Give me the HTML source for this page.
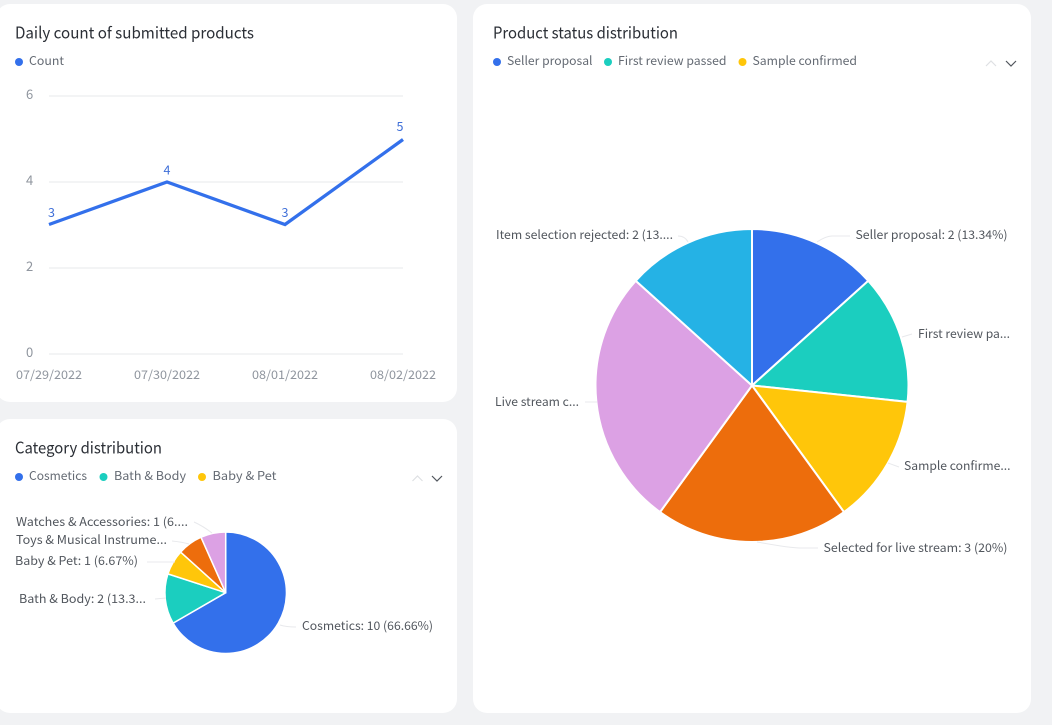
<!DOCTYPE html>
<html lang="en">
<head>
<meta charset="utf-8">
<title>Dashboard</title>
<style>
html,body{margin:0;padding:0;width:1052px;height:725px;overflow:hidden;background:#f1f2f4}
svg{display:block}
text{font-family:"Noto Sans CJK SC","Liberation Sans",sans-serif}
.t{font-size:16px;fill:#2b2f36}
.l{font-size:12px;fill:#646a73}
.a{font-size:12px;fill:#8f959e}
.n{font-size:13px;fill:#8f959e}
.d{font-size:12.5px;fill:#3f6fd8}
.p{font-size:12px;fill:#51565d}
.g{stroke:#eff0f2;stroke-width:1.5;fill:none}
.ln{stroke:#e8e9ec;stroke-width:1;fill:none}
.s{stroke:#fff;stroke-width:2;stroke-linejoin:round}
.s2{stroke:#fff;stroke-width:1.5;stroke-linejoin:round}
</style>
</head>
<body>
<svg width="1052" height="725" viewBox="0 0 1052 725" xmlns="http://www.w3.org/2000/svg">
<rect width="1052" height="725" fill="#f1f2f4"/>
<rect x="-4" y="4" width="461" height="398" rx="14" fill="#fff"/>
<rect x="-4" y="419" width="461" height="294" rx="14" fill="#fff"/>
<rect x="473" y="4" width="558" height="709" rx="14" fill="#fff"/>

<!-- Card 1 -->
<text class="t" x="15" y="38.500" textLength="239" lengthAdjust="spacingAndGlyphs">Daily count of submitted products</text>
<circle cx="19" cy="62" r="4" fill="#3370eb"/>
<text class="l" x="29" y="65" textLength="35" lengthAdjust="spacingAndGlyphs">Count</text>
<path class="g" d="M49 96H403M49 182H403M49 268H403M49 354H403"/>
<text class="n" x="26" y="99">6</text>
<text class="n" x="26" y="185">4</text>
<text class="n" x="26" y="271">2</text>
<text class="n" x="26" y="357">0</text>
<path d="M49 224.500L167 182L285 224.500L403 139.500" fill="none" stroke="#3370eb" stroke-width="3.300"/>
<text class="d" x="48" y="217">3</text>
<text class="d" x="163.500" y="174.500">4</text>
<text class="d" x="281.500" y="217">3</text>
<text class="d" x="396.500" y="131">5</text>
<text class="a" x="16" y="379" textLength="66" lengthAdjust="spacingAndGlyphs">07/29/2022</text>
<text class="a" x="134" y="379" textLength="66" lengthAdjust="spacingAndGlyphs">07/30/2022</text>
<text class="a" x="252" y="379" textLength="66" lengthAdjust="spacingAndGlyphs">08/01/2022</text>
<text class="a" x="370" y="379" textLength="66" lengthAdjust="spacingAndGlyphs">08/02/2022</text>

<!-- Card 2 -->
<text class="t" x="15" y="453.500" textLength="147" lengthAdjust="spacingAndGlyphs">Category distribution</text>
<circle cx="19" cy="477" r="4" fill="#3370eb"/>
<text class="l" x="29" y="480" textLength="58" lengthAdjust="spacingAndGlyphs">Cosmetics</text>
<circle cx="103.500" cy="477" r="4" fill="#1bcebf"/>
<text class="l" x="114" y="480" textLength="72" lengthAdjust="spacingAndGlyphs">Bath &amp; Body</text>
<circle cx="202" cy="477" r="4" fill="#ffc60a"/>
<text class="l" x="212.500" y="480" textLength="64" lengthAdjust="spacingAndGlyphs">Baby &amp; Pet</text>
<path d="M412.500 481L417.500 476L422.500 481" fill="none" stroke="#dee0e3" stroke-width="1.200"/>
<path d="M432 476L437 481L442 476" fill="none" stroke="#51565d" stroke-width="1.200"/>

<path class="s2" fill="#3370eb" d="M225.700 592.700L225.700 531.950A60.750 60.750 0 1 1 173.100 623.100Z"/>
<path class="s2" fill="#1bcebf" d="M225.700 592.700L173.100 623.100A60.750 60.750 0 0 1 167.900 573.900Z"/>
<path class="s2" fill="#ffc60a" d="M225.700 592.700L167.900 573.900A60.750 60.750 0 0 1 180.600 552.100Z"/>
<path class="s2" fill="#ed6d0c" d="M225.700 592.700L180.600 552.100A60.750 60.750 0 0 1 201 537.200Z"/>
<path class="s2" fill="#dca1e4" d="M225.700 592.700L201 537.200A60.750 60.750 0 0 1 225.700 531.950Z"/>
<path class="ln" d="M280 625Q286 627 296 627M166 598L155 599M175 562H147M189 544Q182 542 172 541M212 533Q203 526 194 522"/>
<text class="p" x="16" y="526" textLength="172" lengthAdjust="spacingAndGlyphs">Watches &amp; Accessories: 1 (6....</text>
<text class="p" x="16" y="544" textLength="151" lengthAdjust="spacingAndGlyphs">Toys &amp; Musical Instrume...</text>
<text class="p" x="15" y="565" textLength="123" lengthAdjust="spacingAndGlyphs">Baby &amp; Pet: 1 (6.67%)</text>
<text class="p" x="19" y="603" textLength="127" lengthAdjust="spacingAndGlyphs">Bath &amp; Body: 2 (13.3...</text>
<text class="p" x="302" y="630" textLength="131" lengthAdjust="spacingAndGlyphs">Cosmetics: 10 (66.66%)</text>

<!-- Card 3 -->
<text class="t" x="493" y="38.500" textLength="185" lengthAdjust="spacingAndGlyphs">Product status distribution</text>
<circle cx="497" cy="62" r="4" fill="#3370eb"/>
<text class="l" x="507" y="65" textLength="85.500" lengthAdjust="spacingAndGlyphs">Seller proposal</text>
<circle cx="608" cy="62" r="4" fill="#1bcebf"/>
<text class="l" x="618" y="65" textLength="108.500" lengthAdjust="spacingAndGlyphs">First review passed</text>
<circle cx="742.500" cy="62" r="4" fill="#ffc60a"/>
<text class="l" x="752.500" y="65" textLength="104.500" lengthAdjust="spacingAndGlyphs">Sample confirmed</text>
<path d="M986 66L991 61L996 66" fill="none" stroke="#dee0e3" stroke-width="1.200"/>
<path d="M1006 61L1011 66L1016 61" fill="none" stroke="#51565d" stroke-width="1.200"/>

<path class="s" fill="#3370eb" d="M752 385.500L752 229A156.500 156.500 0 0 1 868.300 280.800Z"/>
<path class="s" fill="#1bcebf" d="M752 385.500L868.300 280.800A156.500 156.500 0 0 1 907.600 401.900Z"/>
<path class="s" fill="#ffc60a" d="M752 385.500L907.600 401.900A156.500 156.500 0 0 1 844 512.100Z"/>
<path class="s" fill="#ed6d0c" d="M752 385.500L844 512.100A156.500 156.500 0 0 1 660 512.100Z"/>
<path class="s" fill="#dca1e4" d="M752 385.500L660 512.100A156.500 156.500 0 0 1 635.700 280.800Z"/>
<path class="s" fill="#25b2e5" d="M752 385.500L635.700 280.800A156.500 156.500 0 0 1 752 229Z"/>
<path class="ln" d="M817 242Q826 236 832 236H850M902 337L912 334M888 463L899 467M757 542Q790 548 800 548H818M688 242Q685 236 678 236M597 402H585"/>
<text class="p" x="496" y="239" textLength="177" lengthAdjust="spacingAndGlyphs">Item selection rejected: 2 (13....</text>
<text class="p" x="495" y="406" textLength="84" lengthAdjust="spacingAndGlyphs">Live stream c...</text>
<text class="p" x="855.500" y="239" textLength="152" lengthAdjust="spacingAndGlyphs">Seller proposal: 2 (13.34%)</text>
<text class="p" x="918" y="338" textLength="92" lengthAdjust="spacingAndGlyphs">First review pa...</text>
<text class="p" x="904" y="470" textLength="106.500" lengthAdjust="spacingAndGlyphs">Sample confirme...</text>
<text class="p" x="823.500" y="552" textLength="184" lengthAdjust="spacingAndGlyphs">Selected for live stream: 3 (20%)</text>
</svg>
</body>
</html>
